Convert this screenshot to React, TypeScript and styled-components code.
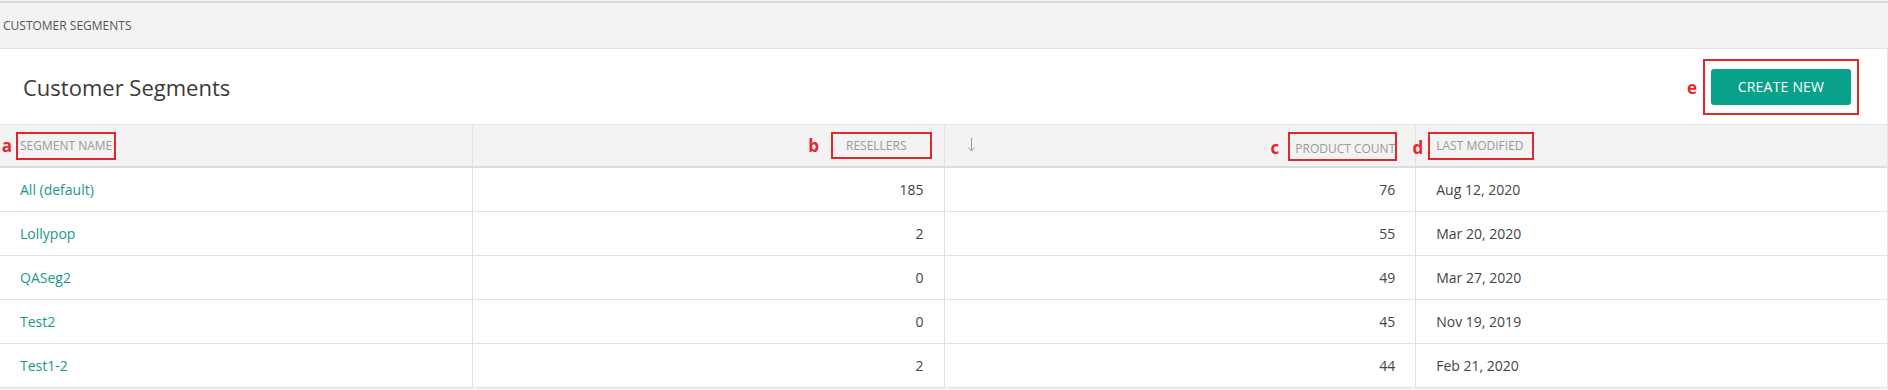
import React from "react";
import styled, { createGlobalStyle } from "styled-components";

const GlobalStyle = createGlobalStyle`
  html, body {
    margin: 0;
    padding: 0;
    background: #f3f3f3;
    font-family: "Open Sans", "Liberation Sans", sans-serif;
  }
  * { box-sizing: border-box; }
`;

const Page = styled.div`
  margin-top: 1px;
  border-top: 2px solid #dadada;
  width: 1888px;
`;

const Breadcrumb = styled.div`
  height: 45px;
  display: flex;
  align-items: center;
  padding-left: 3px;
  font-size: 12px;
  color: #555;
  text-transform: uppercase;
`;

const Card = styled.section`
  background: #fff;
  border-top: 1px solid #e2e2e2;
  border-right: 1px solid #e2e2e2;
`;

const TitleBar = styled.div`
  height: 75px;
  display: flex;
  align-items: center;
  justify-content: space-between;
  padding: 0 36px 0 23px;
`;

const Title = styled.h1`
  margin: 0;
  font-size: 22px;
  font-weight: 400;
  color: #3a3a3a;
`;

const PrimaryButton = styled.button`
  width: 140px;
  height: 36px;
  border: none;
  border-radius: 3px;
  background: #0aa18a;
  color: #fff;
  font-family: "Open Sans", "Liberation Sans", sans-serif;
  font-size: 14px;
  letter-spacing: 0.2px;
  text-transform: uppercase;
  cursor: pointer;
`;

const HeaderRow = styled.div`
  display: grid;
  grid-template-columns: repeat(4, 1fr);
  height: 44px;
  background: #f3f3f3;
  border-top: 1px solid #e2e2e2;
  border-bottom: 2px solid #dcdcdc;
`;

const HeaderCell = styled.div<{ $align: "start" | "end" | "between" }>`
  display: flex;
  align-items: center;
  justify-content: ${(p) =>
    p.$align === "end" ? "flex-end" : p.$align === "between" ? "space-between" : "flex-start"};
  padding: 0 20px;
  & + & {
    border-left: 1px solid #e0e0e0;
  }
`;

const HeaderLabel = styled.span<{ $trail?: number; $drop?: number }>`
  display: inline-block;
  font-size: 12px;
  line-height: 15px;
  color: #9a9a9a;
  text-transform: uppercase;
  padding-right: ${(p) => p.$trail ?? 0}px;
  padding-top: ${(p) => p.$drop ?? 0}px;
`;

const Row = styled.div`
  display: grid;
  grid-template-columns: repeat(4, 1fr);
  height: 44px;
  border-bottom: 1px solid #e2e2e2;
`;

const Cell = styled.div<{ $align?: "start" | "end" }>`
  display: flex;
  align-items: center;
  justify-content: ${(p) => (p.$align === "end" ? "flex-end" : "flex-start")};
  padding: 0 20px;
  font-size: 14px;
  color: #444;
  & + & {
    border-left: 1px solid #e0e0e0;
  }
`;

const SegmentLink = styled.a`
  color: #17998a;
  text-decoration: none;
  cursor: pointer;
`;

const Marker = styled.span<{ $box: [number, number, number, number] }>`
  position: relative;
  display: inline-flex;
  border: 2px solid #e3262b;
  padding: ${(p) => p.$box.map((v) => `${v}px`).join(" ")};
  margin: ${(p) => p.$box.map((v) => `${-(v + 2)}px`).join(" ")};
`;

const MarkerTag = styled.span<{ $gap: number; $dy?: number }>`
  position: absolute;
  right: calc(100% + ${(p) => p.$gap}px);
  top: 50%;
  transform: translateY(calc(-50% + ${(p) => p.$dy ?? 0}px));
  font-family: "Open Sans", "Liberation Sans", sans-serif;
  font-size: 17px;
  font-weight: 700;
  line-height: 1;
  color: #e8262b;
`;

const SortArrow = styled.svg`
  display: block;
  margin-left: 2px;
  margin-top: -3px;
`;

type Segment = {
  name: string;
  resellers: number;
  products: number;
  modified: string;
};

const segments: Segment[] = [
  { name: "All (default)", resellers: 185, products: 76, modified: "Aug 12, 2020" },
  { name: "Lollypop", resellers: 2, products: 55, modified: "Mar 20, 2020" },
  { name: "QASeg2", resellers: 0, products: 49, modified: "Mar 27, 2020" },
  { name: "Test2", resellers: 0, products: 45, modified: "Nov 19, 2019" },
  { name: "Test1-2", resellers: 2, products: 44, modified: "Feb 21, 2020" },
];

export default function App() {
  return (
    <Page>
      <GlobalStyle />
      <Breadcrumb>Customer Segments</Breadcrumb>
      <Card>
        <TitleBar>
          <Title>Customer Segments</Title>
          <Marker $box={[8, 6, 8, 6]}>
            <MarkerTag $gap={8}>e</MarkerTag>
            <PrimaryButton>Create New</PrimaryButton>
          </Marker>
        </TitleBar>
        <HeaderRow>
          <HeaderCell $align="start">
            <Marker $box={[4, 2, 5, 2]}>
              <MarkerTag $gap={6} $dy={-1}>a</MarkerTag>
              <HeaderLabel>Segment Name</HeaderLabel>
            </Marker>
          </HeaderCell>
          <HeaderCell $align="end">
            <Marker $box={[4, 6, 4, 13]}>
              <MarkerTag $gap={14} $dy={-1}>b</MarkerTag>
              <HeaderLabel $trail={17}>Resellers</HeaderLabel>
            </Marker>
          </HeaderCell>
          <HeaderCell $align="between">
            <SortArrow width="9" height="15" viewBox="0 0 9 15" aria-hidden="true">
              <line x1="4.5" y1="1" x2="4.5" y2="14" stroke="#9a9a9a" strokeWidth="1" />
              <polyline points="1.5,10.5 4.5,14 7.5,10.5" fill="none" stroke="#9a9a9a" strokeWidth="1" />
            </SortArrow>
            <Marker $box={[2, 0, 3, 5]}>
              <MarkerTag $gap={11} $dy={1}>c</MarkerTag>
              <HeaderLabel $drop={5}>Product Count</HeaderLabel>
            </Marker>
          </HeaderCell>
          <HeaderCell $align="start">
            <Marker $box={[4, 8, 5, 6]}>
              <MarkerTag $gap={7} $dy={1}>d</MarkerTag>
              <HeaderLabel>Last Modified</HeaderLabel>
            </Marker>
          </HeaderCell>
        </HeaderRow>
        {segments.map((s) => (
          <Row key={s.name}>
            <Cell>
              <SegmentLink>{s.name}</SegmentLink>
            </Cell>
            <Cell $align="end">{s.resellers}</Cell>
            <Cell $align="end">{s.products}</Cell>
            <Cell>{s.modified}</Cell>
          </Row>
        ))}
      </Card>
    </Page>
  );
}
